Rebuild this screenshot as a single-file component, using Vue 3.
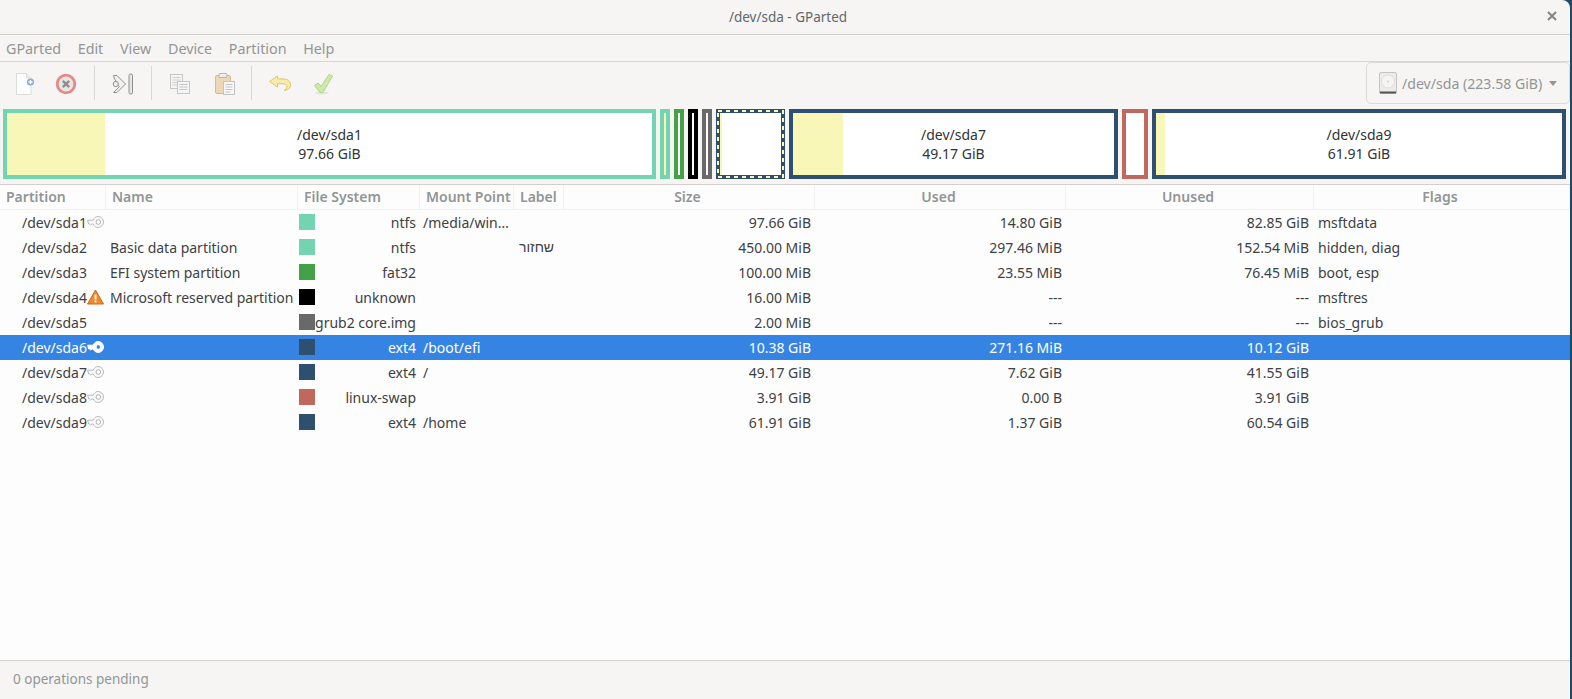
<script setup>
const menus = ['GParted', 'Edit', 'View', 'Device', 'Partition', 'Help']

const segments = [
  { name: '/dev/sda1', size: '97.66 GiB', width: 653, used: 98, color: '#72d4b1' },
  { width: 10, used: 2, color: '#72d4b1' },
  { width: 10, used: 0, color: '#45a148' },
  { width: 10, used: 0, color: '#000000' },
  { width: 10, used: 0, color: '#696969' },
  { width: 69, used: 2, color: '#2f4f70', selected: true },
  { name: '/dev/sda7', size: '49.17 GiB', width: 329, used: 50, color: '#2f4f70' },
  { width: 26, used: 0, color: '#c0675e' },
  { name: '/dev/sda9', size: '61.91 GiB', width: 414, used: 9, color: '#2f4f70' },
]

const columns = [
  { label: 'Partition' }, { label: 'Name' }, { label: 'File System' }, { label: 'Mount Point' }, { label: 'Label' },
  { label: 'Size', center: true }, { label: 'Used', center: true }, { label: 'Unused', center: true }, { label: 'Flags', center: true },
]

const rows = [
  { dev: '/dev/sda1', icon: 'key', name: '', color: '#72d4b1', fs: 'ntfs', mount: '/media/win…', label: '', size: '97.66 GiB', used: '14.80 GiB', unused: '82.85 GiB', flags: 'msftdata' },
  { dev: '/dev/sda2', name: 'Basic data partition', color: '#72d4b1', fs: 'ntfs', mount: '', label: 'שחזור', size: '450.00 MiB', used: '297.46 MiB', unused: '152.54 MiB', flags: 'hidden, diag' },
  { dev: '/dev/sda3', name: 'EFI system partition', color: '#45a148', fs: 'fat32', mount: '', label: '', size: '100.00 MiB', used: '23.55 MiB', unused: '76.45 MiB', flags: 'boot, esp' },
  { dev: '/dev/sda4', icon: 'warn', name: 'Microsoft reserved partition', color: '#000000', fs: 'unknown', mount: '', label: '', size: '16.00 MiB', used: '---', unused: '---', flags: 'msftres' },
  { dev: '/dev/sda5', name: '', color: '#696969', fs: 'grub2 core.img', mount: '', label: '', size: '2.00 MiB', used: '---', unused: '---', flags: 'bios_grub' },
  { dev: '/dev/sda6', icon: 'key', selected: true, name: '', color: '#2f4f70', fs: 'ext4', mount: '/boot/efi', label: '', size: '10.38 GiB', used: '271.16 MiB', unused: '10.12 GiB', flags: '' },
  { dev: '/dev/sda7', icon: 'key', name: '', color: '#2f4f70', fs: 'ext4', mount: '/', label: '', size: '49.17 GiB', used: '7.62 GiB', unused: '41.55 GiB', flags: '' },
  { dev: '/dev/sda8', icon: 'key', name: '', color: '#c0675e', fs: 'linux-swap', mount: '', label: '', size: '3.91 GiB', used: '0.00 B', unused: '3.91 GiB', flags: '' },
  { dev: '/dev/sda9', icon: 'key', name: '', color: '#2f4f70', fs: 'ext4', mount: '/home', label: '', size: '61.91 GiB', used: '1.37 GiB', unused: '60.54 GiB', flags: '' },
]
</script>

<template>
  <div class="window">
    <header class="titlebar">
      <span class="titlebar__title">/dev/sda - GParted</span>
      <svg class="titlebar__close" width="10" height="10" viewBox="0 0 10 10">
        <path d="M1 1l8 8M9 1l-8 8" stroke="#858585" stroke-width="2" />
      </svg>
    </header>

    <nav class="menubar">
      <span v-for="m in menus" :key="m" class="menubar__item">{{ m }}</span>
    </nav>

    <div class="toolbar">
      <button class="tool tool--new">
        <svg width="22" height="24" viewBox="0 0 22 24">
          <path d="M2.5 1.500h10l4.500 4.500v16.500h-14.500z" fill="#fdfdfd" stroke="#dcdcdc" />
          <path d="M12.500 1.500v4.500h4.500" fill="#eeeeee" stroke="#dcdcdc" />
          <circle cx="16.500" cy="10" r="3.600" fill="#8aaed8" />
          <path d="M14.500 10h4M16.500 8v4" stroke="#fff" stroke-width="1.300" />
        </svg>
      </button>
      <button class="tool tool--delete">
        <svg width="22" height="22" viewBox="0 0 22 22">
          <circle cx="11" cy="11" r="8.800" fill="#e8e6e4" stroke="#e58a8a" stroke-width="2.800" />
          <path d="M7.800 7.800l6.400 6.400M14.200 7.800l-6.400 6.400" stroke="#8f8f8f" stroke-width="2.400" />
        </svg>
      </button>
      <i class="toolbar__sep toolbar__sep--a"></i>
      <button class="tool tool--resize">
        <svg width="22" height="22" viewBox="0 0 22 22">
          <path d="M1.500 2.500h3.500l8.500 8.500-8.500 8.500h-3.500l6-6-2.500-2.500-2.500 1.500 3-2.500-3-4z" fill="#f2f1f0" stroke="#8f8f8f" />
          <circle cx="3.800" cy="11" r="2.600" fill="#f2f1f0" stroke="#8f8f8f" />
          <rect x="17" y="1" width="3.500" height="20" rx="1.500" fill="#e6e6e6" stroke="#8f8f8f" />
        </svg>
      </button>
      <i class="toolbar__sep toolbar__sep--b"></i>
      <button class="tool tool--copy">
        <svg width="22" height="22" viewBox="0 0 22 22">
          <rect x="1.500" y="1.500" width="12" height="14" fill="#f5f5f5" stroke="#c6c6c6" />
          <path d="M3.500 4.500h8M3.500 7h8M3.500 9.500h8M3.500 12h6" stroke="#cfcfcf" />
          <rect x="8.500" y="8.500" width="12" height="12" fill="#f5f5f5" stroke="#c6c6c6" />
          <path d="M10.500 11.500h8M10.500 14h8M10.500 16.500h8" stroke="#c6c6c6" />
        </svg>
      </button>
      <button class="tool tool--paste">
        <svg width="22" height="24" viewBox="0 0 22 24">
          <rect x="1.500" y="3.500" width="15" height="18" rx="1.500" fill="#eed7b4" stroke="#d5ba93" />
          <rect x="5" y="1.500" width="8" height="4" rx="1" fill="#ededed" stroke="#b5b5b5" />
          <rect x="9.500" y="9.500" width="11" height="13" fill="#f8f8f8" stroke="#c4c4c4" />
          <path d="M11.500 12.500h7M11.500 15h7M11.500 17.500h7M11.500 20h5" stroke="#c4c4c4" />
        </svg>
      </button>
      <i class="toolbar__sep toolbar__sep--c"></i>
      <button class="tool tool--undo">
        <svg width="24" height="22" viewBox="0 0 24 22">
          <path d="M9.500 3L1.500 8.500l8 5.500v-3.300h5c3 0 4.500 1.300 4.500 3 0 1.900-1.500 3-3 3.800 4-.3 6.500-2.400 6.500-5.800 0-3.800-3-5.800-7.500-5.800h-5.500z" fill="#f8ecaa" stroke="#dcc66e" />
        </svg>
      </button>
      <button class="tool tool--apply">
        <svg width="22" height="22" viewBox="0 0 22 22">
          <ellipse cx="9" cy="20" rx="7" ry="1.500" fill="#e6e4e2" />
          <path d="M1.500 12.500l3.500-2.500 3 3.500L16 1.500l3.500 1.500-9.500 16.500h-3z" fill="#cdeaa8" stroke="#aed58a" />
        </svg>
      </button>

      <button class="devices">
        <svg class="devices__disk" width="18" height="22" viewBox="0 0 18 22">
          <rect x=".5" y=".5" width="17" height="21" rx="1.500" fill="#ecebe9" stroke="#c4c4c4" />
          <rect x="1" y="19.500" width="16" height="2" fill="#555" />
          <circle cx="9" cy="9.500" r="6.500" fill="#f5f4f2" stroke="#e0dfdd" />
          <circle cx="9" cy="9.500" r="1" fill="#d5d5d5" />
        </svg>
        <span>/dev/sda (223.58 GiB)</span>
        <i class="devices__caret"></i>
      </button>
    </div>

    <div class="diskmap">
      <div
        v-for="(s, i) in segments"
        :key="i"
        class="segment"
        :style="{ width: s.width + 'px', borderColor: s.color }"
      >
        <div class="segment__used" :style="{ width: s.used + 'px' }"></div>
        <div v-if="s.name" class="segment__text">
          <span>{{ s.name }}</span>
          <span>{{ s.size }}</span>
        </div>
        <svg v-if="s.selected" class="segment__ants" :width="s.width" height="70">
          <rect x="2" y="2" :width="s.width - 4" height="66" fill="none" stroke="#f8f7b8" stroke-width="2" stroke-dasharray="4 4" />
        </svg>
      </div>
    </div>

    <main class="list">
      <div class="list__row list__row--head">
        <div v-for="c in columns" :key="c.label" class="list__head" :class="{ 'list__head--center': c.center }">{{ c.label }}</div>
      </div>
      <div
        v-for="r in rows"
        :key="r.dev"
        class="list__row"
        :class="{ 'list__row--selected': r.selected }"
      >
        <div class="cell cell--dev">
          <span>{{ r.dev }}</span>
          <svg v-if="r.icon === 'key'" class="keyicon" width="17" height="12" viewBox="0 0 17 12">
            <path
              d="M.6 4.200h5.700c.8-2.300 2.600-3.700 4.800-3.700 2.900 0 5.400 2.500 5.400 5.500s-2.500 5.500-5.400 5.500c-2.200 0-4-1.400-4.800-3.500H5L3.700 9 2.500 8H1.700z"
              :fill="r.selected ? '#fff' : '#fafafa'"
              :stroke="r.selected ? '#fff' : '#b9b9b9'"
            />
            <circle cx="11.300" cy="6" r="2.300" :fill="r.selected ? '#3584e4' : '#fff'" :stroke="r.selected ? '#fff' : '#b0b0b0'" />
          </svg>
          <svg v-else-if="r.icon === 'warn'" class="warnicon" width="17" height="16" viewBox="0 0 17 16">
            <path d="M8.500 1L16.500 15H.5z" fill="#ed8a2e" stroke="#c96a16" stroke-linejoin="round" />
            <path d="M8.500 5.500v5" stroke="#fff3dc" stroke-width="2" />
            <rect x="7.500" y="11.500" width="2" height="2" fill="#fff3dc" />
          </svg>
        </div>
        <div class="cell cell--name">{{ r.name }}</div>
        <div class="cell cell--fs">
          <i class="swatch" :style="{ background: r.color }"></i>
          <span class="cell__fsname">{{ r.fs }}</span>
        </div>
        <div class="cell cell--mount">{{ r.mount }}</div>
        <div class="cell cell--label">{{ r.label }}</div>
        <div class="cell cell--num">{{ r.size }}</div>
        <div class="cell cell--num">{{ r.used }}</div>
        <div class="cell cell--num cell--unused">{{ r.unused }}</div>
        <div class="cell cell--flags">{{ r.flags }}</div>
      </div>
    </main>

    <footer class="statusbar">0 operations pending</footer>
  </div>
</template>

<style>
html, body { margin: 0; background: #1c4a68; overflow: hidden; }
</style>

<style scoped>
.window {
  width: 1570px;
  height: 699px;
  display: flex;
  flex-direction: column;
  background: #f6f5f4;
  border-top-right-radius: 8px;
  overflow: hidden;
  font-family: "Noto Sans", sans-serif;
  font-size: 14px;
  color: #3d4143;
}

.titlebar {
  height: 34px;
  flex: none;
  display: flex;
  align-items: center;
  justify-content: center;
  padding-left: 6px;
  position: relative;
  border-bottom: 1px solid #d3d1ce;
}
.titlebar__title { color: #62676a; font-size: 13.5px; }
.titlebar__close { position: absolute; right: 13px; top: 11px; }

.menubar {
  height: 26px;
  flex: none;
  display: flex;
  align-items: center;
  padding-left: 6px;
  gap: 16.7px;
  border-bottom: 1px solid #d8d6d3;
}
.menubar__item { color: #929595; font-size: 14.3px; }

.toolbar {
  height: 46px;
  flex: none;
  display: flex;
  align-items: flex-start;
}
.tool {
  border: 0;
  padding: 0;
  background: none;
  display: block;
  margin-top: 10px;
  line-height: 0;
}
.tool--new { margin-left: 14px; }
.tool--delete { margin-left: 19px; margin-top: 11px; }
.tool--resize { margin-left: 17px; margin-top: 11px; }
.tool--copy { margin-left: 17px; margin-top: 11px; }
.tool--paste { margin-left: 23px; }
.tool--undo { margin-left: 16px; margin-top: 11px; }
.tool--apply { margin-left: 21px; margin-top: 11px; }

.toolbar__sep {
  width: 1px;
  height: 34px;
  margin-top: 4px;
  background: #d9d7d4;
}
.toolbar__sep--a { margin-left: 17px; }
.toolbar__sep--b { margin-left: 17px; }
.toolbar__sep--c { margin-left: 15px; }

.devices {
  margin-left: auto;
  width: 204px;
  height: 42px;
  box-sizing: border-box;
  display: flex;
  align-items: center;
  padding: 0 0 0 12px;
  background: #f6f5f4;
  border: 1px solid #dcdad7;
  border-radius: 5px;
  font: inherit;
  font-size: 14.1px;
  color: #929595;
}
.devices__disk { margin-right: 5px; flex: none; }
.devices__caret {
  margin-left: 7px;
  width: 0;
  height: 0;
  border-left: 4px solid transparent;
  border-right: 4px solid transparent;
  border-top: 5px solid #929595;
}

.diskmap {
  height: 77px;
  flex: none;
  box-sizing: border-box;
  display: flex;
  gap: 4px;
  padding: 1px 0 0 3px;
  border-bottom: 1px solid #d5d0cc;
}
.segment {
  position: relative;
  flex: none;
  height: 70px;
  box-sizing: border-box;
  border: 4px solid;
  background: #fff;
}
.segment__used { height: 100%; background: #f8f7b8; }
.segment__text {
  position: absolute;
  inset: 0;
  display: flex;
  flex-direction: column;
  align-items: center;
  justify-content: center;
  line-height: 19px;
  color: #2e3436;
}
.segment__ants { position: absolute; left: -4px; top: -4px; }

.list {
  flex: 1;
  background: #fdfdfd;
  min-height: 0;
}
.list__row {
  display: grid;
  grid-template-columns: 106px 192px 122px 94px 50px 251px 251px 248px 1fr;
  height: 25px;
  align-items: center;
}
.list__row--selected {
  background: #3584e4;
  color: #fff;
}
.list__head {
  height: 25px;
  box-sizing: border-box;
  padding-left: 6px;
  line-height: 23px;
  color: #929595;
  font-weight: 600;
  border-right: 1px solid #f1f0ee;
  border-bottom: 1px solid #f1f0ee;
}
.list__head--center { text-align: center; padding-left: 0; padding-right: 3px; }

.cell { white-space: nowrap; overflow: hidden; padding-bottom: 1px; }
.cell--dev {
  padding-left: 22px;
  display: flex;
  align-items: center;
}
.cell--name { padding-left: 4px; }
.cell--fs {
  display: flex;
  align-items: center;
  padding-left: 1px;
}
.cell__fsname { flex: 1; text-align: right; padding-right: 4px; }
.swatch { width: 16px; height: 16px; flex: none; }
.cell--mount { padding-left: 3px; }
.cell--label { padding-left: 5px; font-family: "Liberation Sans", sans-serif; }
.cell--num { text-align: right; padding-right: 4px; }
.cell--unused { padding-right: 5px; }
.cell--flags { padding-left: 4px; }

.statusbar {
  height: 38px;
  flex: none;
  border-top: 1px solid #d5d0cc;
  padding-left: 13px;
  line-height: 37px;
  font-size: 13.5px;
  color: #929595;
}
</style>
